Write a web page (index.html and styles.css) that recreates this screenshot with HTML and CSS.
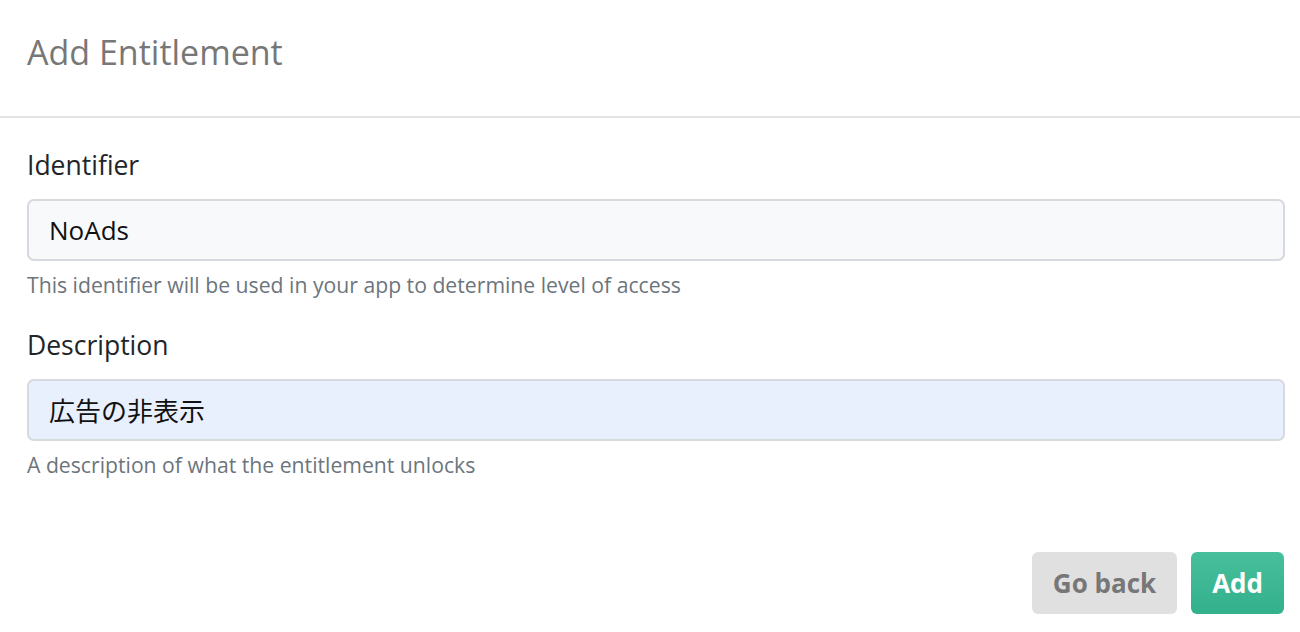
FILE: index.html
```html
<!DOCTYPE html>
<html lang="en">
<head>
    <meta charset="UTF-8">
    <title>Add Entitlement</title>
    <link rel="stylesheet" href="styles.css">
</head>
<body>

<div class="modal-header">
    <h1>Add Entitlement</h1>
</div>

<div class="modal-body">
    <div class="form-group">
        <label for="identifier">Identifier</label>
        <input type="text" id="identifier" class="form-control" value="NoAds">
        <small class="form-text">This identifier will be used in your app to determine level of access</small>
    </div>
    <div class="form-group">
        <label for="description">Description</label>
        <input type="text" id="description" class="form-control autofilled" value="広告の非表示">
        <small class="form-text">A description of what the entitlement unlocks</small>
    </div>
</div>

<div class="modal-footer">
    <button class="btn btn-secondary">Go back</button>
    <button class="btn btn-primary">Add</button>
</div>

</body>
</html>
```

FILE: styles.css
```css
body {
    margin: 0;
    font-family: 'Open Sans', 'Noto Sans CJK JP', sans-serif;
    background-color: #fff;
    color: #212529;
}
.modal-header {
    height: 118px;
    border-bottom: 2px solid #e3e3e3;
    padding: 0 27px;
    box-sizing: border-box;
}
h1 {
    margin: 0;
    padding-top: 30px;
    font-size: 34px;
    font-weight: 400;
    color: #777;
    line-height: 44px;
}
.modal-body {
    padding: 30px 15px 0 27px;
}
.form-group {
    margin-bottom: 30px;
}
.form-group + .form-group {
    margin-top: 2px;
}
label {
    display: block;
    font-size: 26.5px;
    line-height: 34px;
    margin-bottom: 17px;
    color: #212529;
}
.form-control {
    display: block;
    width: 100%;
    box-sizing: border-box;
    height: 62px;
    padding: 0 20px;
    font-family: 'Open Sans', 'Noto Sans CJK JP', sans-serif;
    font-size: 26px;
    color: #111;
    background-color: #f8f9fb;
    border: 2px solid #d6d9de;
    border-radius: 7px;
    outline: none;
}
.form-control.autofilled {
    background-color: #e8f0fe;
}
.form-text {
    display: block;
    margin-top: 10px;
    font-size: 21.2px;
    line-height: 27px;
    color: #6c757d;
}
.modal-footer {
    display: flex;
    justify-content: flex-end;
    gap: 14px;
    padding: 44px 16px 0 27px;
}
.btn {
    height: 62px;
    padding: 0 21px;
    border: none;
    border-radius: 6px;
    font-family: 'Open Sans', sans-serif;
    font-size: 26px;
    font-weight: 700;
    cursor: pointer;
}
.btn-secondary {
    background-color: #e0e0e0;
    color: #777;
}
.btn-primary {
    background: linear-gradient(#48bf9c, #33b08c);
    color: #fff;
}
```
